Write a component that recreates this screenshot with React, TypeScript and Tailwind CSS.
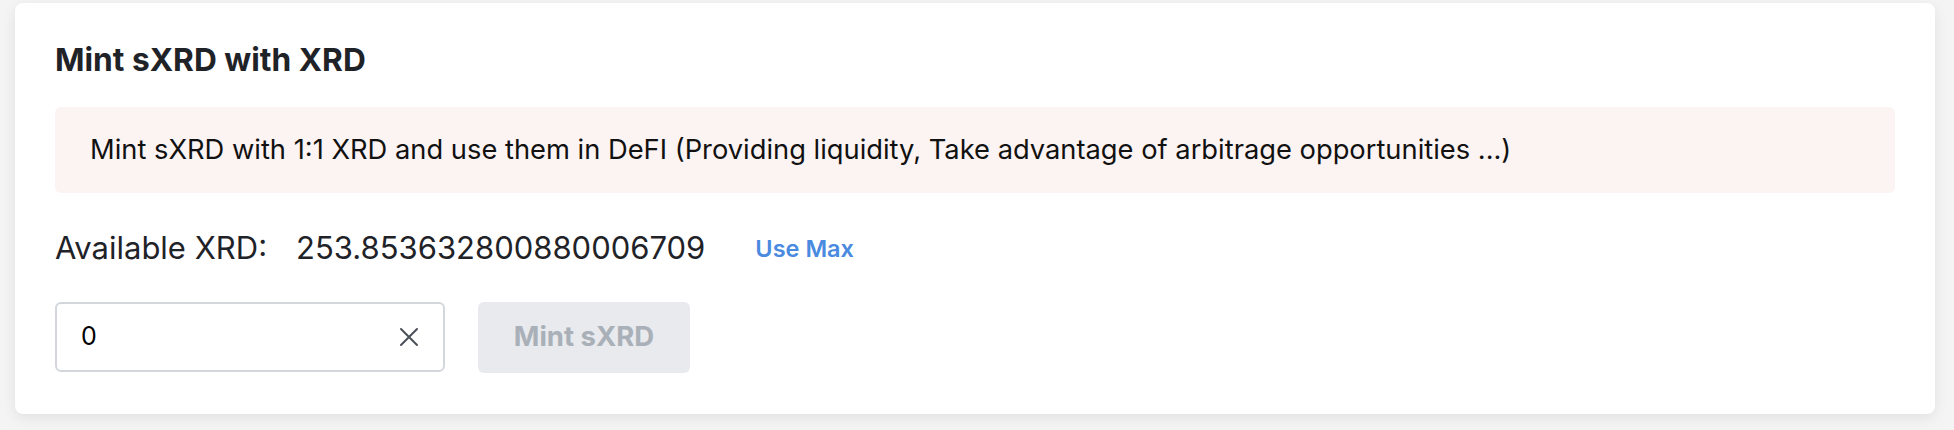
const CloseIcon = () => (
    <svg width="20" height="20" viewBox="0 0 20 20" fill="none" stroke="#4b5058" strokeWidth="2" strokeLinecap="round">
        <path d="M2 2L18 18M18 2L2 18" />
    </svg>
)

const MintCard = () => {
    return (
        <div className="w-[1920px] ml-[15px] rounded-lg bg-white px-10 pt-[37px] pb-[41px] shadow-[0_4px_14px_rgba(0,0,0,0.08)]">
            <h2 className="text-[31.7px] font-bold leading-[40px] text-[#1f2328]">Mint sXRD with XRD</h2>

            <div className="mt-[27px] h-[86px] rounded-md bg-[#fcf3f3] px-[35px] flex items-center">
                <p className="text-[27.3px] text-[#111]">
                    Mint sXRD with 1:1 XRD and use them in DeFI (Providing liquidity, Take advantage of arbitrage opportunities ...)
                </p>
            </div>

            <div className="mt-[32px] flex items-center text-[31px] text-[#1f2328]">
                <span>Available XRD:</span>
                <span className="ml-[29px]">253.853632800880006709</span>
                <button className="ml-[50px] text-[23.5px] font-semibold text-[#4a8ae0]">Use Max</button>
            </div>

            <div className="mt-[30px] flex items-center gap-[33px]">
                <div className="w-[390px] h-[70px] rounded-md border-2 border-[#d3d7dc] flex items-center pl-[24px] pr-[24px]">
                    <input className="flex-1 min-w-0 text-[25px] text-black outline-none bg-transparent" defaultValue="0" />
                    <CloseIcon />
                </div>
                <button disabled className="w-[212px] h-[71px] rounded-md bg-[#e8eaee] text-[27.5px] font-bold text-[#a9b0b8]">
                    Mint sXRD
                </button>
            </div>
        </div>
    )
}

export default function App() {
    return (
        <div className="min-h-[430px] bg-[#f4f4f4] pt-[3px] font-['Inter','Liberation_Sans',sans-serif]">
            <MintCard />
        </div>
    )
}
